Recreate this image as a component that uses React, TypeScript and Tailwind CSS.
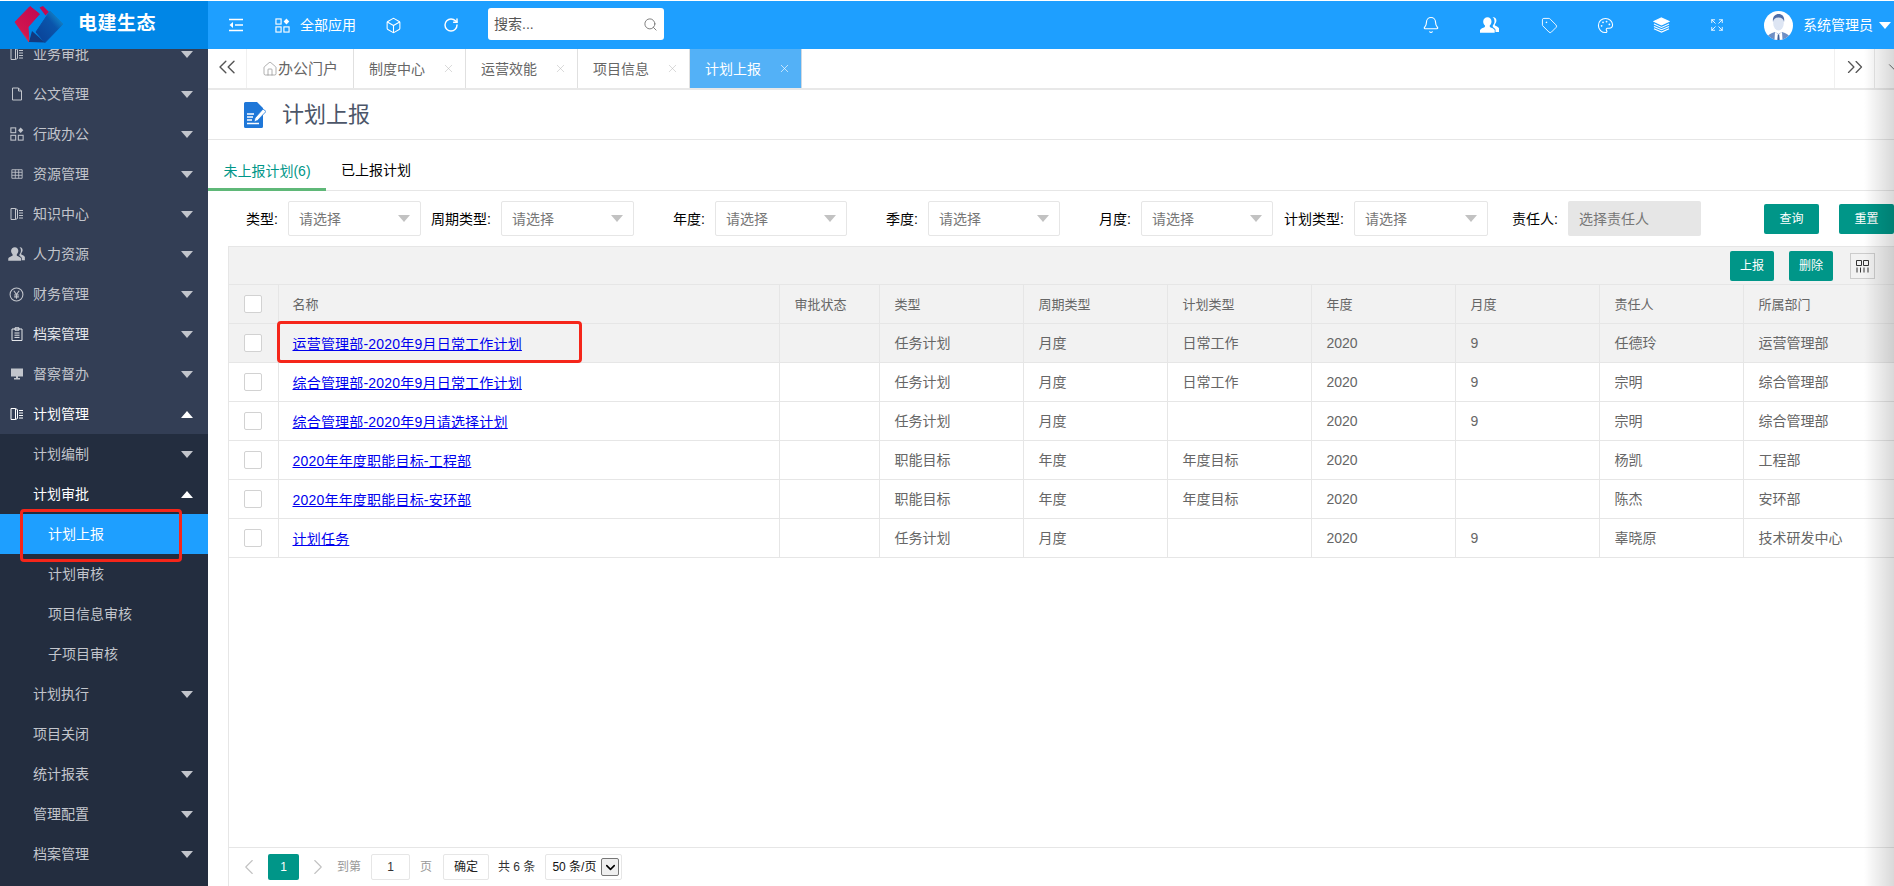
import { Bell, Box, ChevronDown, ChevronLeft, ChevronRight, ChevronsLeft, ChevronsRight, Expand, Home, Palette, RotateCw, Search, Tag, X } from "lucide-react";
import type { ReactNode } from "react";

function BookIcon() {
  return (
    <svg viewBox="0 0 14 14" className="w-[14px] h-[14px]" fill="none" stroke="currentColor" strokeWidth="1">
      <path d="M1 1.5h4.5v11H1zM5.5 1.5l2 1.2v8.8l-2 1" />
      <path d="M9 3.5h4M9 6h4M9 8.5h4M9 11h4" />
    </svg>
  );
}

function AppsIcon({ className }: { className: string }) {
  return (
    <svg viewBox="0 0 16 16" className={className} fill="none" stroke="currentColor" strokeWidth="1.2">
      <rect x="1" y="1" width="5.5" height="5.5" />
      <rect x="1" y="9.5" width="5.5" height="5.5" />
      <rect x="9.5" y="9.5" width="5.5" height="5.5" />
      <path d="M12.2 0.5l3 3.2-3 3.2-3-3.2z" fill="currentColor" stroke="none" />
    </svg>
  );
}

function FileIcon() {
  return (
    <svg viewBox="0 0 14 14" className="w-[14px] h-[14px]" fill="none" stroke="currentColor" strokeWidth="1">
      <path d="M2.5 1h6l3 3v9h-9zM8.5 1v3h3" />
    </svg>
  );
}

function TableIcon() {
  return (
    <svg viewBox="0 0 14 14" className="w-[12px] h-[12px]" fill="none" stroke="currentColor" strokeWidth="1">
      <path d="M1 2h12v10H1zM1 5h12M1 8.5h12M5 2v10M9 2v10" />
    </svg>
  );
}

function UsersIcon({ className }: { className: string }) {
  return (
    <svg viewBox="0 0 20 16" className={className} fill="currentColor">
      <path d="M12.8 8.2c1-.9 1.7-2.4 1.7-4C14.5 2 13.6.6 12.5.3c2.3-.6 3.9 1 3.9 3.2 0 1.5-.6 2.8-1.5 3.6v1.4c1.7.7 3.6 1.6 4.1 2.8V15h-3.5v-2.4c-.7-1.4-1.8-2.2-2.7-2.7z" />
      <path d="M7.5.3c2.3 0 4 1.7 4 4.1 0 1.6-.7 3-1.7 3.9v1.6c2 .8 4.2 1.7 4.9 3.1v2.7H0V13c.7-1.4 2.9-2.3 4.9-3.1V8.300C3.900 7.400 3.200 6 3.200 4.400 3.200 2 5.200.3 7.500.3z" />
    </svg>
  );
}

function YenIcon() {
  return (
    <svg viewBox="0 0 14 14" className="w-[15px] h-[15px]" fill="none" stroke="currentColor" strokeWidth="1">
      <circle cx="7" cy="7" r="6" />
      <path d="M4.5 3.5L7 7l2.5-3.5M7 7v4M4.8 7.5h4.4M4.8 9.2h4.4" />
    </svg>
  );
}

function ClipboardIcon() {
  return (
    <svg viewBox="0 0 14 14" className="w-[14px] h-[14px]" fill="none" stroke="currentColor" strokeWidth="1">
      <path d="M2 2h10v11.5H2zM5 .8h4v2.4H5zM4.500 6h5M4.500 8.200h5M4.500 10.400h5" />
    </svg>
  );
}

function BoardIcon() {
  return (
    <svg viewBox="0 0 14 14" className="w-[14px] h-[14px]" fill="currentColor">
      <path d="M1 1.5h12v8H8V11h2v1.5H4V11h2V9.5H1z" />
    </svg>
  );
}

function Caret({ up, color }: { up?: boolean; color: string }) {
  return (
    <span
      className={`block w-0 h-0 border-x-[6px] border-x-transparent ${up ? "border-b-[7px]" : "border-t-[7px]"}`}
      style={up ? { borderBottomColor: color } : { borderTopColor: color }}
    />
  );
}

type MenuItem = { label: string; icon?: ReactNode; caret?: "down" | "up"; tone?: string };

const MENU: MenuItem[] = [
  { label: "业务审批", icon: <BookIcon />, caret: "down" },
  { label: "公文管理", icon: <FileIcon />, caret: "down" },
  { label: "行政办公", icon: <AppsIcon className="w-[14px] h-[14px]" />, caret: "down" },
  { label: "资源管理", icon: <TableIcon />, caret: "down" },
  { label: "知识中心", icon: <BookIcon />, caret: "down" },
  { label: "人力资源", icon: <UsersIcon className="w-[18px] h-[14px]" />, caret: "down" },
  { label: "财务管理", icon: <YenIcon />, caret: "down" },
  { label: "档案管理", icon: <ClipboardIcon />, caret: "down", tone: "text-[#e4e6ea]" },
  { label: "督察督办", icon: <BoardIcon />, caret: "down" },
  { label: "计划管理", icon: <BookIcon />, caret: "up", tone: "text-white" },
];

const SUBMENU: { label: string; indent?: boolean; caret?: "down" | "up"; strong?: boolean; active?: boolean }[] = [
  { label: "计划编制", caret: "down" },
  { label: "计划审批", caret: "up", strong: true },
  { label: "计划上报", indent: true, active: true },
  { label: "计划审核", indent: true },
  { label: "项目信息审核", indent: true },
  { label: "子项目审核", indent: true },
  { label: "计划执行", caret: "down" },
  { label: "项目关闭" },
  { label: "统计报表", caret: "down" },
  { label: "管理配置", caret: "down" },
  { label: "档案管理", caret: "down" },
];

const FILTERS = [
  { label: "类型", labelClass: "w-[80px]", boxClass: "w-[133px]" },
  { label: "周期类型", labelClass: "w-[80px]", boxClass: "w-[133px]" },
  { label: "年度", labelClass: "w-[81px]", boxClass: "w-[132px]" },
  { label: "季度", labelClass: "w-[81px]", boxClass: "w-[132px]" },
  { label: "月度", labelClass: "w-[81px]", boxClass: "w-[132px]" },
  { label: "计划类型", labelClass: "w-[81px]", boxClass: "w-[134px]" },
];

const COLUMNS = ["审批状态", "类型", "周期类型", "计划类型", "年度", "月度", "责任人", "所属部门"];

const ROWS = [
  { name: "运营管理部-2020年9月日常工作计划", cells: ["", "任务计划", "月度", "日常工作", "2020", "9", "任德玲", "运营管理部"] },
  { name: "综合管理部-2020年9月日常工作计划", cells: ["", "任务计划", "月度", "日常工作", "2020", "9", "宗明", "综合管理部"] },
  { name: "综合管理部-2020年9月请选择计划", cells: ["", "任务计划", "月度", "", "2020", "9", "宗明", "综合管理部"] },
  { name: "2020年年度职能目标-工程部", cells: ["", "职能目标", "年度", "年度目标", "2020", "", "杨凯", "工程部"] },
  { name: "2020年年度职能目标-安环部", cells: ["", "职能目标", "年度", "年度目标", "2020", "", "陈杰", "安环部"] },
  { name: "计划任务", cells: ["", "任务计划", "月度", "", "2020", "9", "辜晓原", "技术研发中心"] },
];

const TABS = ["制度中心", "运营效能", "项目信息"];

function Logo() {
  return (
    <svg viewBox="0 0 49 38" className="w-[49px] h-[38px]">
      <defs>
        <linearGradient id="red" x1="0" y1="1" x2="0.7" y2="0">
          <stop offset="0" stopColor="#f08a3c" />
          <stop offset="0.35" stopColor="#d0154f" />
          <stop offset="1" stopColor="#c40a50" />
        </linearGradient>
        <linearGradient id="blue" x1="0" y1="1" x2="1" y2="0">
          <stop offset="0" stopColor="#0a3f94" />
          <stop offset="0.6" stopColor="#0a55ab" />
          <stop offset="1" stopColor="#18a5dc" />
        </linearGradient>
      </defs>
      <path d="M1 17L16 1.5 25.5 9 14 22l1 15z" fill="url(#red)" stroke="url(#red)" strokeLinejoin="round" />
      <path d="M25.5 2.5L29 1l6 6-3.5 3.5z" fill="#c40a50" />
      <path d="M22 27L36 6l13 13-18 18.5z" fill="url(#blue)" stroke="url(#blue)" strokeLinejoin="round" />
      <path d="M15 37l3-11 13 11.5z" fill="#123a80" />
    </svg>
  );
}

function Avatar() {
  return (
    <svg viewBox="0 0 29 29" className="w-[29px] h-[29px] rounded-full bg-white">
      <path d="M2 29c1-5 5-7 9-8l3.5 2 3.5-2c4 1 8 3 9 8z" fill="#6f8fc4" />
      <path d="M11 21l3.5 2.5L18 21l.5 8h-8z" fill="#fff" />
      <path d="M13.8 23.5h1.4l.5 5.5h-2.4z" fill="#3f5e96" />
      <ellipse cx="14.5" cy="12" rx="5.3" ry="7.5" fill="#dde5f3" />
      <path d="M9 11c-.8-5 2-8 5.700-8C18.500 3 21 6 20 11c-.5-3-2-4.500-5.500-4.500S9.500 8 9 11z" fill="#4f6da8" />
    </svg>
  );
}

function Checkbox() {
  return <span className="block w-[18px] h-[18px] bg-white border border-[#d2d2d2] rounded-[2px]" />;
}

function Button({ label, className = "" }: { label: string; className?: string }) {
  return (
    <button className={`w-[44px] h-[30px] bg-[#009688] text-white text-xs rounded-[2px] ${className}`}>{label}</button>
  );
}

const HEADER_ICONS = [
  { key: "bell", width: "w-[56px]", icon: <Bell size={18} strokeWidth={1.5} /> },
  { key: "users", width: "w-[62px]", icon: <UsersIcon className="w-[20px] h-[16px]" /> },
  { key: "tag", width: "w-[56px]", icon: <Tag size={17} strokeWidth={1.3} /> },
  { key: "palette", width: "w-[56px]", icon: <Palette size={17} strokeWidth={1.5} /> },
  {
    key: "layers",
    width: "w-[56px]",
    icon: (
      <svg viewBox="0 0 18 16" className="w-[17px] h-[16px]" fill="none" stroke="currentColor" strokeWidth="1.1">
        <path d="M9 .5l8 3.7-8 3.7-8-3.7z" fill="currentColor" />
        <path d="M1 7l8 3.5L17 7M1 9.5L9 13l8-3.5M1 12l8 3.5 8-3.5" />
      </svg>
    ),
  },
  { key: "expand", width: "w-[56px]", icon: <Expand size={14} strokeWidth={1.5} /> },
];

export default function App() {
  return (
    <div className="relative w-[1894px] h-[886px] overflow-hidden bg-white flex flex-col font-['Liberation_Sans','Noto_Sans_CJK_SC',sans-serif] text-sm">
      <div className="h-px bg-white" />

      {/* Header */}
      <header className="h-[48px] shrink-0 flex items-center bg-[#1e9fff] text-white">
        <div className="w-[208px] h-full shrink-0 bg-[#0086e6] flex items-center pl-[14px] pb-[2px]">
          <Logo />
          <span className="ml-[15px] text-[19px] font-bold tracking-[0.5px]">电建生态</span>
        </div>
        <svg viewBox="0 0 16 14" className="ml-[20px] w-[16px] h-[14px]" fill="none" stroke="currentColor" strokeWidth="1.7">
          <path d="M1 1.5h14M7 7h8M1 12.5h14" />
          <path d="M5 4L1.5 7 5 10z" fill="currentColor" stroke="none" />
        </svg>
        <AppsIcon className="ml-[31px] w-[15px] h-[15px]" />
        <span className="ml-[10px] text-sm">全部应用</span>
        <Box size={17} strokeWidth={1.5} className="ml-[29px]" />
        <RotateCw size={16} strokeWidth={2.2} className="ml-[41px]" />
        <div className="ml-[29px] w-[176px] h-[32px] -mt-[2px] bg-white rounded-[3px] flex items-center justify-between pl-[6px] pr-[6px] text-[#555]">
          <span>搜索...</span>
          <Search size={15} strokeWidth={1.5} className="text-[#777]" />
        </div>
        <div className="ml-auto flex items-center">
          {HEADER_ICONS.map((item) => (
            <span key={item.key} className={`${item.width} flex justify-center`}>
              {item.icon}
            </span>
          ))}
          <span className="ml-[19px]">
            <Avatar />
          </span>
          <span className="ml-[10px] text-sm">系统管理员</span>
          <span className="ml-[6px] mr-[3px]">
            <Caret color="#ffffff" />
          </span>
        </div>
      </header>

      <div className="flex flex-1 min-h-0">
        {/* Sidebar */}
        <aside className="w-[208px] shrink-0 overflow-hidden bg-[#333e55] text-[#c2c5cc]">
          <div className="-mt-[15px]">
            {MENU.map((item) => (
              <div key={item.label} className={`h-[40px] flex items-center ${item.tone ?? ""}`}>
                <span className="w-[33px] flex justify-center pl-[3px] shrink-0 pr-[3px]">{item.icon}</span>
                <span className="flex-1">{item.label}</span>
                <span className="mr-[15px]">
                  <Caret up={item.caret === "up"} color={item.tone === "text-white" ? "#ffffff" : "#c2c5cc"} />
                </span>
              </div>
            ))}
            <div className="bg-[#232d3f] pb-[20px]">
              {SUBMENU.map((item) => (
                <div
                  key={item.label + item.indent}
                  className={`h-[40px] flex items-center ${item.indent ? "pl-[48px]" : "pl-[33px]"} ${
                    item.active ? "bg-[#1e9fff] text-white" : item.strong ? "text-white" : ""
                  }`}
                >
                  <span className="flex-1">{item.label}</span>
                  {item.caret && (
                    <span className="mr-[15px]">
                      <Caret up={item.caret === "up"} color={item.strong ? "#ffffff" : "#c2c5cc"} />
                    </span>
                  )}
                </div>
              ))}
            </div>
          </div>
        </aside>

        <main className="flex-1 min-w-0 flex flex-col overflow-hidden">
          {/* Open tabs */}
          <div className="h-[41px] shrink-0 flex border-b-2 border-[#e8e8e8] text-[#666]">
            <div className="w-[39px] shrink-0 flex items-center justify-center border-r border-[#f0f0f0]">
              <ChevronsLeft size={28} strokeWidth={1.2} className="-mt-[3px] shrink-0 text-[#555]" />
            </div>
            <div className="w-[107px] shrink-0 flex items-center pl-[15px] border-r border-[#e0e0e0]">
              <Home size={16} strokeWidth={1} className="text-[#888] shrink-0" />
              <span className="text-[15px]">办公门户</span>
            </div>
            {TABS.map((tab) => (
              <div key={tab} className="w-[112px] shrink-0 flex items-center justify-between pl-[15px] pr-[10px] border-r border-[#e0e0e0]">
                <span>{tab}</span>
                <X size={13} strokeWidth={1} className="text-[#bbb]" />
              </div>
            ))}
            <div className="w-[112px] shrink-0 flex items-center justify-between pl-[15px] pr-[10px] bg-[#53b1f7] text-white border-r border-[#d0d8e0]">
              <span>计划上报</span>
              <X size={13} strokeWidth={1.2} />
            </div>
            <div className="flex-1" />
            <div className="w-[40px] shrink-0 flex items-center justify-center border-l border-[#f0f0f0]">
              <ChevronsRight size={26} strokeWidth={1.2} className="-mt-[3px] shrink-0 text-[#555]" />
            </div>
            <div className="w-[20px] shrink-0 overflow-hidden flex items-center border-l border-[#e8e8e8]">
              <ChevronDown size={18} strokeWidth={1.3} className="ml-[10px] shrink-0 -mt-[3px]" />
            </div>
          </div>

          {/* Page title */}
          <div className="h-[50px] shrink-0 flex items-center pl-[36px] border-b border-[#e6e6e6]">
            <svg viewBox="0 0 22 26" className="w-[22px] h-[26px]">
              <path d="M0 1.5A1.5 1.5 0 0 1 1.5 0H13l6 6v18.5a1.5 1.5 0 0 1-1.5 1.5h-16A1.5 1.5 0 0 1 0 24.500z" fill="#1f77d8" />
              <path d="M3 12h7M3 15h6M3 18h5M3 21.5h12" stroke="#fff" strokeWidth="1.3" />
              <path d="M10 20l1-4L19 7l3 2.5-8.5 9z" fill="#fff" stroke="#1f77d8" strokeWidth="0.8" />
            </svg>
            <h1 className="ml-[16px] text-[22px] font-normal text-[#4c5669]">计划上报</h1>
          </div>

          {/* Section tabs */}
          <div className="h-[51px] shrink-0 flex border-b border-[#e6e6e6]">
            <div className="w-[118px] h-[51px] pt-[13px] flex items-center justify-center text-[#009688] border-b-[3px] border-[#5fb878] box-border">未上报计划(6)</div>
            <div className="pl-[15px] pt-[10px] flex items-center text-black">已上报计划</div>
          </div>

          {/* Filters */}
          <div className="h-[55px] shrink-0 flex items-start pt-[10px]">
            {FILTERS.map((f) => (
              <div key={f.label} className="flex shrink-0">
                <span className={`${f.labelClass} h-[35px] flex items-center justify-end pr-[10px] text-black`}>{f.label}:</span>
                <div className={`${f.boxClass} h-[35px] bg-white border border-[#e6e6e6] rounded-[2px] flex items-center justify-between pl-[10px] pr-[10px] text-[#777]`}>
                  <span>请选择</span>
                  <Caret color="#c2c2c2" />
                </div>
              </div>
            ))}
            <div className="flex shrink-0">
              <span className="w-[80px] h-[35px] flex items-center justify-end pr-[10px] text-black">责任人:</span>
              <div className="w-[133px] h-[35px] bg-[#e6e6e6] rounded-[2px] flex items-center pl-[11px] text-[#777]">选择责任人</div>
            </div>
            <button className="ml-[63px] mt-[3px] shrink-0 w-[55px] h-[30px] bg-[#009688] text-white text-xs rounded-[2px]">查询</button>
            <button className="ml-[20px] mt-[3px] shrink-0 w-[55px] h-[30px] bg-[#009688] text-white text-xs rounded-[2px]">重置</button>
          </div>

          {/* Table */}
          <div className="ml-[20px] flex-1 min-h-0 flex flex-col border-l border-t border-[#e6e6e6]">
            <div className="h-[37px] shrink-0 bg-[#f2f2f2] flex items-center justify-end pr-[19px] pt-[1px]">
              <Button label="上报" />
              <Button label="删除" className="ml-[15px]" />
              <span className="ml-[17px] w-[25px] h-[26px] border border-[#cccccc] flex items-center justify-center">
                <svg viewBox="0 0 13 13" className="w-[13px] h-[13px]" fill="none" stroke="#333" strokeWidth="1">
                  <path d="M.5.5h5v5h-5zM7.5.5h5v5h-5zM1 7.5v5M4.500 7.500v5M8 7.500v5M12 7.500v5" />
                </svg>
              </span>
            </div>
            <table className="w-[1666px] table-fixed shrink-0 border-t border-[#e6e6e6]">
              <colgroup>
                <col className="w-[49px]" />
                <col className="w-[501px]" />
                <col className="w-[100px]" />
                <col className="w-[144px]" />
                <col className="w-[144px]" />
                <col className="w-[144px]" />
                <col className="w-[144px]" />
                <col className="w-[144px]" />
                <col className="w-[144px]" />
                <col />
              </colgroup>
              <thead>
                <tr className="h-[39px] bg-[#f2f2f2] text-[13px] text-[#666]">
                  <th className="border-r border-b border-[#e6e6e6] pl-[15px] font-normal">
                    <Checkbox />
                  </th>
                  <th className="border-r border-b border-[#e6e6e6] pl-[14px] pt-[2px] text-left font-normal">名称</th>
                  {COLUMNS.map((c) => (
                    <th key={c} className="border-r border-b border-[#e6e6e6] pl-[15px] pt-[2px] text-left font-normal">
                      {c}
                    </th>
                  ))}
                </tr>
              </thead>
              <tbody>
                {ROWS.map((row, i) => (
                  <tr key={row.name} className={`h-[39px] text-[#666] ${i === 0 ? "bg-[#f2f2f2]" : ""}`}>
                    <td className="border-r border-b border-[#e6e6e6] pl-[15px]">
                      <Checkbox />
                    </td>
                    <td className="border-r border-b border-[#e6e6e6] pl-[14px] pt-[2px]">
                      <a href="#" className="text-[#0000ee] underline tracking-[0.2px]">
                        {row.name}
                      </a>
                    </td>
                    {row.cells.map((cell, j) => (
                      <td key={j} className="border-r border-b border-[#e6e6e6] pl-[15px]">
                        {cell}
                      </td>
                    ))}
                  </tr>
                ))}
              </tbody>
            </table>
            <div className="flex-1" />

            {/* Pagination */}
            <div className="h-[39px] shrink-0 border-t border-[#e6e6e6] flex items-center pl-[7px] text-xs text-[#999]">
              <ChevronLeft size={26} strokeWidth={1} className="text-[#c2c2c2] shrink-0" />
              <span className="ml-[6px] w-[31px] h-[26px] bg-[#009688] text-white rounded-[2px] flex items-center justify-center">1</span>
              <ChevronRight size={26} strokeWidth={1} className="ml-[6px] text-[#c2c2c2] shrink-0" />
              <span className="ml-[6px]">到第</span>
              <span className="ml-[10px] w-[39px] h-[26px] border border-[#e6e6e6] rounded-[2px] flex items-center justify-center text-[#333]">1</span>
              <span className="ml-[10px]">页</span>
              <span className="ml-[11px] w-[46px] h-[26px] border border-[#e6e6e6] rounded-[2px] flex items-center justify-center text-[#222]">确定</span>
              <span className="ml-[9px] text-[#333]">共 6 条</span>
              <span className="ml-[10px] w-[77px] h-[26px] border border-[#e6e6e6] rounded-[2px] flex items-center pl-[6px] text-[#111]">
                <span className="w-[49px]">50 条/页</span>
                <span className="w-[18px] h-[18px] bg-[#efefef] border border-[#767676] rounded-[2px] flex items-center justify-center">
                  <ChevronDown size={15} strokeWidth={2.5} className="text-black" />
                </span>
              </span>
            </div>
          </div>
        </main>
      </div>

      {/* Right edge shadow */}
      <div className="absolute right-0 top-[49px] bottom-0 w-[30px] pointer-events-none bg-gradient-to-r from-transparent to-black/15" />

      {/* Red annotation boxes */}
      <div className="absolute left-[20px] top-[509px] w-[162px] h-[53px] border-[3px] border-[#f5261a] rounded-[4px] pointer-events-none" />
      <div className="absolute left-[277px] top-[321px] w-[305px] h-[42px] border-[3px] border-[#f5261a] rounded-[4px] pointer-events-none" />
    </div>
  );
}
